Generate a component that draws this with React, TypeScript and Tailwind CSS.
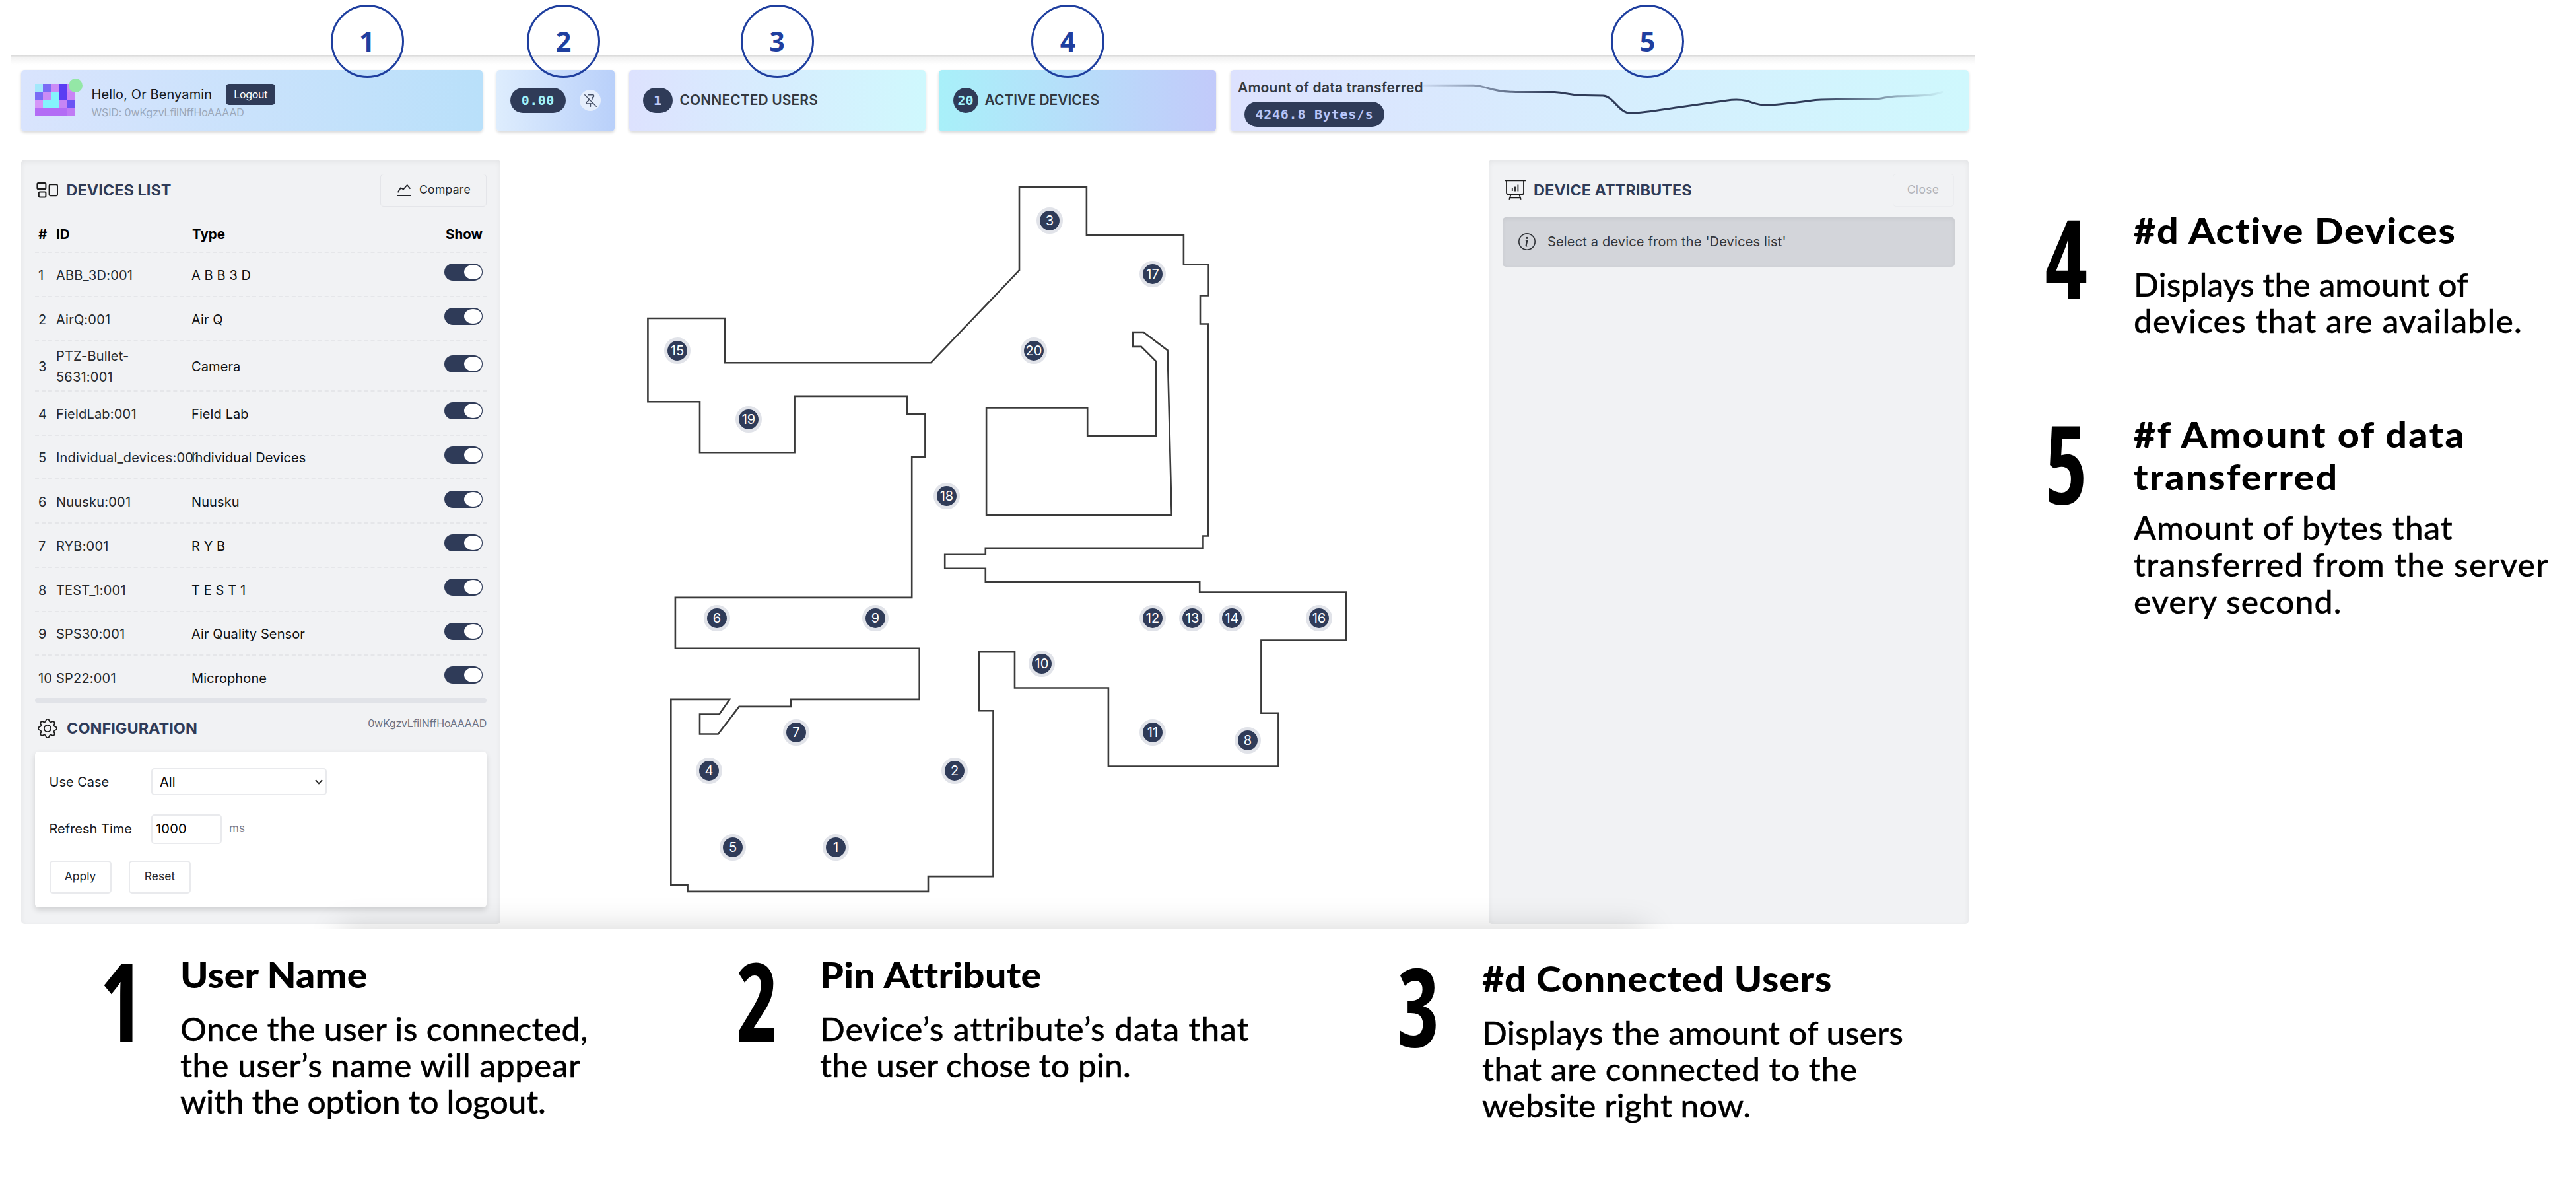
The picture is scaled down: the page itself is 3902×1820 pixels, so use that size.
import React from "react";
import { BsGear, BsInfoCircle } from "react-icons/bs";
import { PinOff } from "lucide-react";

const AVATAR = [
  "bg-[#a3e8fb]", "bg-[#7a6cf5]", "bg-[#cb8cf6]", "bg-[#5a3df3]", "bg-[#cb8cf6]",
  "bg-[#7a6cf5]", "bg-[#cb8cf6]", "bg-[#84f4fd]", "bg-[#5a3df3]", "bg-[#c983f6]",
  "bg-[#d596f8]", "bg-[#84f4fd]", "bg-[#84f4fd]", "bg-[#c685f5]", "bg-[#6a54f4]",
  "bg-[#b36cf5]", "bg-[#b36cf5]", "bg-[#b36cf5]", "bg-[#b36cf5]", "bg-[#c07af5]",
];

const DEVICES: { id: string[]; type: string }[] = [
  { id: ["ABB_3D:001"], type: "A B B 3 D" },
  { id: ["AirQ:001"], type: "Air Q" },
  { id: ["PTZ-Bullet-", "5631:001"], type: "Camera" },
  { id: ["FieldLab:001"], type: "Field Lab" },
  { id: ["Individual_devices:001"], type: "Individual Devices" },
  { id: ["Nuusku:001"], type: "Nuusku" },
  { id: ["RYB:001"], type: "R Y B" },
  { id: ["TEST_1:001"], type: "T E S T 1" },
  { id: ["SPS30:001"], type: "Air Quality Sensor" },
  { id: ["SP22:001"], type: "Microphone" },
];

const MAP_X = 758;
const MAP_Y = 241.5;

const PINS: [number, number, number][] = [
  [1, 1266, 1283], [2, 1446, 1167], [3, 1590, 334], [4, 1074, 1167], [5, 1110, 1283],
  [6, 1086, 936], [7, 1206, 1109], [8, 1890, 1121], [9, 1326, 936], [10, 1578, 1005],
  [11, 1746, 1109], [12, 1746, 936], [13, 1806, 936], [14, 1866, 936], [15, 1026, 531],
  [16, 1998, 936], [17, 1746, 415], [18, 1434, 751], [19, 1134, 635], [20, 1566, 531],
];

const OUTER =
  "M981.4 481.5H1097.9V548.8H1410L1544 408.7V282.8H1645.9V355.2H1792.9V399.8H1830.6V447H1818V490H1829.8V811H1822.4V829.2H1492.8V839.3H1431.2V860.3H1492.8V880.1H1817.2V896.1H2039V969H1910.4V1079.3H1936.4V1160H1678.9V1041H1537V985.7H1483.3V1075.7H1504.5V1326.6H1406V1349.4H1041.6V1339.4H1016.3V1058.4H1105.3L1089.4 1081.1H1060V1111H1087.8L1119.6 1069.4H1198V1058.4H1392.7V981.2H1022.9V904.4H1381.2V691.1H1401.4V626.7H1374.3V599.4H1203.6V684.8H1060V607.8H981.4Z";
const INNER =
  "M1494.1 617H1647.2V659.5H1750.8V546.3L1728.7 524.4H1716.1V502.5H1732.2L1768.6 529.9L1774.7 779.5H1494.1Z";

function Toggle() {
  return (
    <div className="-mt-[9px] flex h-[26px] w-[58px] items-center justify-end rounded-full bg-[#2f3b58] pr-[1.5px]">
      <div className="h-[22px] w-[27px] rounded-[50%] bg-white" />
    </div>
  );
}

function Badge({ n, pos }: { n: number; pos: string }) {
  return (
    <div
      className={`absolute top-[7px] flex h-[111px] w-[111px] items-center justify-center rounded-full border-[3px] border-[#1f3f9f] [font-family:'Open_Sans',sans-serif] text-[41px] font-bold text-[#1f3f9f] ${pos}`}
    >
      {n}
    </div>
  );
}

function Note({
  n, box, text, title, lines, lh = "leading-[55px]", gap = "mt-[22px]", numTop,
}: {
  n: number; box: string; text: string; title: [string, string][]; lines: [string, string][];
  lh?: string; gap?: string; numTop: string;
}) {
  return (
    <div className={`flex items-start text-black ${box}`}>
      <div
        className={`flex h-[118px] w-[60px] shrink-0 justify-center [font-family:'Open_Sans',sans-serif] text-[164px] leading-[109px] font-bold [font-stretch:75%] ${numTop}`}
      >
        <span className="block scale-x-[0.84]">{n}</span>
      </div>
      <div className={`whitespace-nowrap [font-family:Lato,sans-serif] ${text}`}>
        {title.map(([t, tr]) => (
          <div key={t} className={`origin-left scale-x-[1.08] text-[53px] leading-[64px] font-black ${tr}`}>{t}</div>
        ))}
        <div className={`origin-left scale-x-[1.04] text-[48px] font-medium [-webkit-text-stroke:0.3px_black] ${lh} ${gap}`}>
          {lines.map(([t, tr]) => (
            <div key={t} className={tr}>{t}</div>
          ))}
        </div>
      </div>
    </div>
  );
}

function Header() {
  const card = "h-[93px] rounded-[5px] shadow-[0_2px_4px_rgba(0,0,0,0.16)]";
  const pill = "flex h-[38px] items-center justify-center rounded-full bg-[#2f3b58] [font-family:'DejaVu_Sans_Mono',monospace] font-bold";
  return (
    <div className="flex pt-[21.5px] pl-[15px]">
      <div className={`flex w-[698.5px] items-start bg-linear-to-r from-[#d9e4fd] to-[#b9e0fa] pt-[21px] pl-[20.5px] ${card}`}>
        <div className="relative grid grid-cols-5">
          {AVATAR.map((c, i) => (
            <div key={i} className={`h-3 w-3 ${c}`} />
          ))}
          <div className="absolute -top-2 left-[51px] h-[21px] w-[21px] rounded-full bg-[#94e7a6]" />
        </div>
        <div className="ml-[26px]">
          <div className="flex h-8 items-center">
            <span className="text-[20px] tracking-[0.1px] text-[#15181d]">Hello, Or Benyamin</span>
            <span className="ml-[21px] flex h-8 w-[75px] items-center justify-center rounded-[5px] bg-[#2f3b58] text-[16px] tracking-[-0.3px] text-white">
              Logout
            </span>
          </div>
          <div className="text-[16px] leading-[22px] tracking-[-0.16px] text-[#9aa8ba]">WSID: 0wKgzvLfilNffHoAAAAD</div>
        </div>
      </div>
      <div className={`ml-[21.5px] flex w-[179px] items-center bg-linear-to-r from-[#deedfd] to-[#b9d0fa] pl-[21px] ${card}`}>
        <div className={`w-[83.5px] text-[20px] tracking-[0.5px] text-[#a3f3fa] ${pill}`}>0.00</div>
        <div className="ml-[21.5px] flex h-8 w-8 items-center justify-center rounded-full bg-[#e6eefc]">
          <PinOff className="h-[21px] w-[21px] text-[#475066]" strokeWidth={1.6} />
        </div>
      </div>
      <div className={`ml-[21.5px] flex w-[449px] items-center bg-linear-to-r from-[#dde2fe] to-[#cff8fd] pl-[21px] ${card}`}>
        <div className={`w-[45px] text-[20px] text-[#c3cdfb] ${pill}`}>1</div>
        <span className="ml-[11px] text-[21px] font-semibold tracking-[0.1px] text-[#33383f]">CONNECTED USERS</span>
      </div>
      <div className={`ml-[20.5px] flex w-[420px] items-center bg-linear-to-r from-[#a8f0f9] to-[#c2cafa] pl-[21.5px] ${card}`}>
        <div className={`w-[38px] text-[20px] text-[#a3f3fa] ${pill}`}>20</div>
        <span className="ml-[10px] text-[21px] font-semibold text-[#33383f]">ACTIVE DEVICES</span>
      </div>
      <div className={`relative ml-[22px] w-[1117.5px] bg-linear-to-r from-[#dde2fe] to-[#cff8fd] pt-[16px] pl-[11px] ${card}`}>
        <div className="text-[21px] leading-[21px] font-semibold tracking-[0.2px] text-[#33383f]">Amount of data transferred</div>
        <div className={`mt-[11.5px] ml-[10px] w-[212px] text-[20px] tracking-[0.75px] text-[#b9c6f9] ${pill}`}>4246.8 Bytes/s</div>
        <svg className="absolute top-0 left-0 h-full w-full" viewBox="1864 105.5 1117.5 93" fill="none">
          <defs>
            <linearGradient id="fade" gradientUnits="userSpaceOnUse" x1="2150" y1="0" x2="2950" y2="0">
              <stop offset="0" stopColor="#2f3b58" stopOpacity="0.05" />
              <stop offset="0.25" stopColor="#2f3b58" />
              <stop offset="0.75" stopColor="#2f3b58" />
              <stop offset="1" stopColor="#2f3b58" stopOpacity="0" />
            </linearGradient>
          </defs>
          <path
            d="M2156 128.7H2231C2252 129 2256 138 2290 138.8C2312 139.4 2330 139 2355 139C2372 139.5 2376 144 2400 144L2428 144.5C2444 144.8 2452 171 2470 170.8C2496 170 2524 164 2551 160.7L2615 151.7C2626 150 2634 149.6 2645 152C2656 155 2662 158.8 2675 158.7C2694 158.3 2722 154.5 2750 151C2778 149 2810 150 2837 149.7C2852 149.5 2858 145.5 2875 145.2C2896 144.5 2922 146 2942 139"
            stroke="url(#fade)" strokeWidth="3" strokeLinecap="round"
          />
        </svg>
      </div>
    </div>
  );
}

function DevicesPanel() {
  return (
    <div className="h-[1157px] w-[726px] rounded-[5px] bg-[#f1f2f4] px-[21px] pt-[21px] shadow-[inset_0_3px_8px_rgba(0,0,0,0.06)]">
      <div className="flex h-[50px] items-center">
        <svg className="ml-[2px] h-6 w-[34px]" viewBox="0 0 34 24" fill="none" stroke="#1c1c1c" strokeWidth="2">
          <rect x="1.4" y="1" width="13" height="9" rx="1.6" />
          <rect x="3.8" y="14.4" width="10.6" height="8" rx="1.6" />
          <rect x="19.6" y="3.2" width="12.4" height="17" rx="2" />
        </svg>
        <span className="ml-[11.5px] pt-px text-[23.5px] font-bold text-[#2f3b58]">DEVICES LIST</span>
        <div className="ml-auto flex h-[50px] w-[161px] items-center rounded-[5px] border-[1.5px] border-[#e4e5e9] pl-[24px]">
          <svg className="h-[20px] w-[22px]" viewBox="601 278 22 20" fill="none" stroke="#22242a" strokeWidth="1.8">
            <path d="M602.6 291.3L607 284.2L610.9 286.6L616.7 280L621.5 285.6M602 296H622" strokeLinejoin="round" />
          </svg>
          <span className="ml-[12px] text-[17.5px] tracking-[0.3px] text-[#22242a]">Compare</span>
        </div>
      </div>
      <div className="mt-[16px] grid h-[54.5px] grid-cols-[27px_206px_1fr_auto] items-center border-b-2 border-dashed border-[#e5e6e9] pt-[2px] pr-[6px] pl-[5px] text-[20.5px] font-bold text-black">
        <span>#</span>
        <span>ID</span>
        <span>Type</span>
        <span>Show</span>
      </div>
      {DEVICES.map((d, i) => (
        <div
          key={d.type}
          className={`grid grid-cols-[27px_205px_1fr_58px] items-center pr-[6px] pl-[5px] text-[20px] whitespace-nowrap ${
            d.id.length > 1 ? "h-[76.3px]" : "h-[66.75px]"
          } ${i < 9 ? "border-b-2 border-dashed border-[#e5e6e9] pt-[3px]" : ""}`}
        >
          <span className="text-[#26282c]">{i + 1}</span>
          <span className="leading-8 tracking-[0.2px] text-[#26282c]">
            {d.id.map((l) => (
              <span key={l} className="block">{l}</span>
            ))}
          </span>
          <span className="tracking-[0.1px] text-[#0f1012]">{d.type}</span>
          <Toggle />
        </div>
      ))}
      <div className="-mt-[3px] h-[6.5px] rounded-full bg-[#e1e3e8]" />
      <div className="flex h-[74px] items-start">
        <BsGear className="mt-[24.5px] ml-[3.5px] h-[30px] w-[30px] text-[#1c1c1c]" />
        <span className="mt-[21.5px] ml-[14.5px] text-[23.5px] leading-9 font-bold text-[#2f3b58]">CONFIGURATION</span>
        <span className="mt-[19px] ml-auto text-[16px] leading-6 tracking-[-0.23px] text-[#6d7182]">0wKgzvLfilNffHoAAAAD</span>
      </div>
      <div className="h-[236.5px] rounded-[5px] bg-white pt-[26px] pl-[21.5px] text-[20px] text-[#17191d] shadow-[0_4px_8px_rgba(0,0,0,0.14)]">
        <div className="flex h-10 items-center">
          <span className="w-[154.5px]">Use Case</span>
          <div className="flex h-[41px] w-[266px] items-center justify-between rounded-[5px] border-2 border-[#e9eaed] pr-[4px] pl-[11px] text-black">
            All
            <svg className="h-2 w-3" viewBox="0 0 12 8" fill="none" stroke="#2a2a2a" strokeWidth="1.9">
              <path d="M1 1L6 6.4L11 1" />
            </svg>
          </div>
        </div>
        <div className="mt-[29px] flex h-[45px] items-center">
          <span className="w-[154.5px]">Refresh Time</span>
          <div className="flex h-[45px] w-[107px] items-center rounded-[5px] border-2 border-[#e9eaed] pl-[5px] tracking-[0.2px] text-black">1000</div>
          <span className="ml-[11px] text-[17px] text-[#777b8c]">ms</span>
        </div>
        <div className="mt-[25px] flex gap-[26.5px] text-[17.5px] text-[#22242a]">
          <div className="flex h-[50px] w-[94px] items-center justify-center rounded-[5px] border-2 border-[#e9eaed]">Apply</div>
          <div className="flex h-[50px] w-[94px] items-center justify-center rounded-[5px] border-2 border-[#e9eaed]">Reset</div>
        </div>
      </div>
    </div>
  );
}

function FloorMap() {
  return (
    <div className="relative h-[1158px] w-[1496.5px]">
      <svg className="h-full w-full" viewBox="758 241.5 1496.5 1158" fill="none" stroke="#3a3a3a" strokeWidth="2.6">
        <path d={OUTER} />
        <path d={INNER} />
      </svg>
      {PINS.map(([n, x, y]) => (
        <div
          key={n}
          className="absolute flex h-10 w-10 -translate-x-1/2 -translate-y-1/2 items-center justify-center rounded-full border-5 border-[#e1e3e9] bg-[#2f3b58] text-[20px] text-white"
          style={{ left: x - MAP_X, top: y - MAP_Y }}
        >
          {n}
        </div>
      ))}
    </div>
  );
}

function AttributesPanel() {
  return (
    <div className="h-[1157px] w-[727px] rounded-[5px] bg-[#f1f2f4] px-[21px] pt-[21px] shadow-[inset_0_3px_8px_rgba(0,0,0,0.06)]">
      <div className="flex h-[50px] items-center">
        <svg className="ml-[2.5px] h-8 w-[34px]" viewBox="2278 272 34 32" fill="none" stroke="#1c1c1c" strokeWidth="1.8">
          <path d="M2279 273.4H2311M2282 273.4V291.5Q2282 294.6 2285 294.6H2305Q2308 294.6 2308 291.5V273.4M2288.5 295L2286 302.6M2301.5 295L2304 302.6M2287.5 299.3H2302.6" />
          <path d="M2290.8 285V289M2295 282.5V289.5M2299.4 279.5V289.5" />
        </svg>
        <span className="ml-[11px] pt-px text-[23.5px] font-bold text-[#2f3b58]">DEVICE ATTRIBUTES</span>
        <div className="mr-px ml-auto flex h-[50px] w-[93px] items-center justify-center rounded-[5px] border-[1.5px] border-[#ebecef] text-[17.5px] tracking-[0.3px] text-[#b2b4ba]">
          Close
        </div>
      </div>
      <div className="mt-[16.5px] flex h-[74.5px] items-center rounded-[5px] bg-[#d3d5da] pl-[24px] shadow-[inset_0_2px_6px_rgba(0,0,0,0.06)]">
        <BsInfoCircle className="h-[26px] w-[26px] text-[#2e3136]" />
        <span className="ml-[18.5px] text-[20px] tracking-[0.17px] text-[#33363b]">Select a device from the 'Devices list'</span>
      </div>
    </div>
  );
}

export default function App() {
  return (
    <div className="flex h-[1820px] w-[3902px] overflow-hidden bg-white [font-family:Inter,sans-serif]">
      <div className="relative w-[3010px] shrink-0">
        <div className="relative mt-[84px] ml-[17px] h-[1321.5px] w-[2974px] overflow-hidden">
          <div className="absolute inset-x-0 top-0 h-[14px] bg-linear-to-b from-[#d9d9d9] via-[#f3f3f3] via-25% to-white" />
          <div className="relative">
            <Header />
            <div className="mt-[43px] ml-[15px] flex">
              <DevicesPanel />
              <FloorMap />
              <AttributesPanel />
            </div>
          </div>
          <div className="absolute bottom-[-60px] left-[498px] h-[60px] w-[1980px] shadow-[0_0_48px_rgba(0,0,0,0.17)]" />
        </div>
        <Badge n={1} pos="left-[500.5px]" />
        <Badge n={2} pos="left-[798px]" />
        <Badge n={3} pos="left-[1121.5px]" />
        <Badge n={4} pos="left-[1562px]" />
        <Badge n={5} pos="left-[2440px]" />
        <div className="flex items-start pt-[38.5px]">
          <Note
            n={1}
            box="ml-[153px] w-[964px]"
            text="ml-[60px]"
            numTop="mt-[15px]"
            title={[["User Name", "tracking-[0px]"]]}
            lines={[
              ["Once the user is connected,", "tracking-[0.3px]"],
              ["the user’s name will appear", "tracking-[0.45px]"],
              ["with the option to logout.", "tracking-[-0.3px]"],
            ]}
          />
          <Note
            n={2}
            box="w-[1001px]"
            text="ml-[65px]"
            numTop="mt-[15px]"
            title={[["Pin Attribute", "tracking-[0.4px]"]]}
            lines={[
              ["Device’s attribute’s data that", "tracking-[0.78px]"],
              ["the user chose to pin.", "tracking-[0px]"],
            ]}
          />
          <Note
            n={3}
            box="mt-[6px]"
            text="ml-[67px]"
            numTop="mt-[16.5px]"
            title={[["#d Connected Users", "tracking-[0.75px]"]]}
            lines={[
              ["Displays the amount of users", "tracking-[0.14px]"],
              ["that are connected to the", "tracking-[0.45px]"],
              ["website right now.", "tracking-[0.1px]"],
            ]}
          />
        </div>
      </div>
      <div className="pt-[316.5px] pl-[89px]">
        <Note
          n={4}
          box="h-[309.5px]"
          text="ml-[73px]"
          numTop="mt-[17px]"
          title={[["#d Active Devices", "tracking-[1.75px]"]]}
          lines={[
            ["Displays the amount of", "tracking-[0px]"],
            ["devices that are available.", "tracking-[1px]"],
          ]}
        />
        <Note
          n={5}
          box=""
          text="ml-[73px]"
          numTop="mt-[19px]"
          lh="leading-[56px]"
          gap="mt-[17px]"
          title={[
            ["#f Amount of data", "tracking-[2.15px]"],
            ["transferred", "tracking-[2px]"],
          ]}
          lines={[
            ["Amount of bytes that", "tracking-[0.78px]"],
            ["transferred from the server", "tracking-[1.2px]"],
            ["every second.", "tracking-[1.1px]"],
          ]}
        />
      </div>
    </div>
  );
}
